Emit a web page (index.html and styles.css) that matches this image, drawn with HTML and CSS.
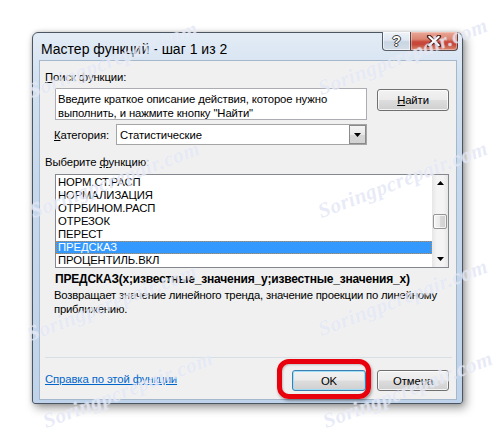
FILE: index.html
```html
<!DOCTYPE html>
<html lang="ru">
<head>
<meta charset="utf-8">
<title>Мастер функций - шаг 1 из 2</title>
<link rel="stylesheet" href="styles.css">
</head>
<body>
<div class="stage">
  <div class="window">
    <div class="titlebar">
      <span class="title">Мастер функций - шаг 1 из 2</span>
      <div class="caption-btns">
        <span class="cbtn help">?</span>
        <span class="cbtn close">
          <svg width="16" height="12" viewBox="0 0 16 12">
            <path d="M3 1.5 L13 10.5 M13 1.5 L3 10.5" stroke="#4a1c16" stroke-width="4.2" stroke-linecap="round"/>
            <path d="M3.3 1.8 L12.7 10.2 M12.7 1.8 L3.3 10.2" stroke="#ffffff" stroke-width="2.2" stroke-linecap="round"/>
          </svg>
        </span>
      </div>
    </div>
    <div class="client">
      <div class="label"><u>П</u>оиск функции:</div>
      <div class="search-row">
        <div class="textbox">Введите краткое описание действия, которое нужно выполнить, и нажмите кнопку "Найти"</div>
        <button class="btn find"><u>Н</u>айти</button>
      </div>
      <div class="cat-row">
        <span class="cat-label"><u>К</u>атегория:</span>
        <div class="combo">
          <span class="combo-text">Статистические</span>
          <span class="combo-btn">
            <svg width="7" height="4" viewBox="0 0 7 4"><path d="M0 0 H7 L3.5 4 Z" fill="#000"/></svg>
          </span>
        </div>
      </div>
      <div class="label choose">Выберите <u>ф</u>ункцию:</div>
      <div class="listbox">
        <ul class="items">
          <li>НОРМ.СТ.РАСП</li>
          <li>НОРМАЛИЗАЦИЯ</li>
          <li>ОТРБИНОМ.РАСП</li>
          <li>ОТРЕЗОК</li>
          <li>ПЕРЕСТ</li>
          <li class="selected">ПРЕДСКАЗ</li>
          <li>ПРОЦЕНТИЛЬ.ВКЛ</li>
        </ul>
        <div class="scrollbar">
          <span class="sb-arrow"><svg width="7" height="4" viewBox="0 0 7 4"><path d="M0 4 H7 L3.5 0 Z" fill="#000"/></svg></span>
          <span class="sb-track-top"></span>
          <span class="sb-thumb"></span>
          <span class="sb-track-bottom"></span>
          <span class="sb-arrow"><svg width="7" height="4" viewBox="0 0 7 4"><path d="M0 0 H7 L3.5 4 Z" fill="#000"/></svg></span>
        </div>
      </div>
      <div class="syntax">ПРЕДСКАЗ(x;известные_значения_y;известные_значения_x)</div>
      <div class="desc">Возвращает значение линейного тренда, значение проекции по линейному<br>приближению.</div>
      <div class="spacer"></div>
      <div class="separator"></div>
      <div class="footer">
        <a class="help-link" href="#">Справка по этой функции</a>
        <div class="footer-btns">
          <span class="ok-wrap"><button class="btn ok">OK</button></span>
          <button class="btn cancel">Отмена</button>
        </div>
      </div>
    </div>
  </div>

  <span class="wm wm1">Soringpcrepair.com</span>
  <span class="wm wm2">Soringpcrepair.com</span>
  <span class="wm wm3">Soringpcrepair.com</span>
  <span class="wm wm4">Soringpcrepair.com</span>
  <span class="wm wm5">Soringpcrepair.com</span>
  <span class="wm wm6">Soringpcrepair.com</span>
  <span class="wm wm7">Soringpcrepair.com</span>
  <span class="wm wm8">Soringpcrepair.com</span>
</div>
</body>
</html>
```

FILE: styles.css
```css
html, body {
  margin: 0;
  padding: 0;
  background: #ffffff;
}

.stage {
  position: relative;
  width: 497px;
  height: 439px;
  box-sizing: border-box;
  padding: 32px 0 0 32px;
  overflow: hidden;
  font-family: "Liberation Sans", Arial, sans-serif;
  font-size: 11.3px;
  letter-spacing: -0.1px;
  color: #000;
}

/* ---------- window frame ---------- */
.window {
  width: 431px;
  height: 372px;
  box-sizing: border-box;
  border: 1px solid #4b5662;
  border-radius: 6px 6px 3px 3px;
  background: linear-gradient(180deg, #e3ecf6 0%, #d3e1f0 12%, #c6d8ec 40%, #bfd3ea 100%);
  box-shadow: 3px 4px 10px rgba(0, 0, 0, 0.38), 0 0 4px rgba(0, 0, 0, 0.18);
  display: flex;
  flex-direction: column;
}

.titlebar {
  height: 27px;
  flex: none;
  display: flex;
  justify-content: space-between;
  align-items: flex-start;
  padding: 0 4px 0 8px;
}

.title {
  font-size: 14px;
  line-height: 14px;
  margin-top: 9px;
  letter-spacing: 0;
  color: #000;
}

.caption-btns {
  display: flex;
  margin-top: -1px;
}

.cbtn {
  height: 19px;
  box-sizing: border-box;
  border: 1px solid rgba(40, 48, 60, 0.75);
  border-top: none;
  display: flex;
  align-items: center;
  justify-content: center;
}

.help {
  width: 28px;
  border-right: none;
  border-radius: 0 0 0 4px;
  background: linear-gradient(180deg, #eef3f8 0%, #dfe7f0 45%, #c9d5e2 55%, #d3dde8 100%);
  box-shadow: inset 0 0 0 1px rgba(255, 255, 255, 0.6);
  color: #fff;
  font-weight: bold;
  font-size: 14px;
  text-shadow: 0 0 1px #333, 1px 0 0 #444, -1px 0 0 #444, 0 1px 0 #444, 0 -1px 0 #444;
}

.close {
  width: 48px;
  border-radius: 0 0 4px 0;
  background: linear-gradient(180deg, #e9a899 0%, #db8571 40%, #c9473a 55%, #c5483a 70%, #d98a72 100%);
  box-shadow: inset 0 0 0 1px rgba(255, 220, 210, 0.45);
}

/* ---------- client ---------- */
.client {
  flex: 1;
  margin: 0 5px 3px 6px;
  box-sizing: border-box;
  border: 1px solid #a4b7cb;
  background: #f0f0f0;
  padding: 9px 5px 8px 5px;
  display: flex;
  flex-direction: column;
}

.label {
  line-height: 15px;
  height: 15px;
}

.search-row {
  display: flex;
  align-items: flex-start;
  margin: 3px 0 0 10px;
  gap: 10px;
}

.textbox {
  width: 312px;
  height: 32px;
  box-sizing: border-box;
  border: 1px solid #abadb3;
  background: #fff;
  padding: 3px 2px 0 2px;
  line-height: 14px;
  overflow: hidden;
}

.btn {
  font-family: "Liberation Sans", Arial, sans-serif;
  font-size: 11.3px;
  letter-spacing: -0.1px;
  color: #000;
  box-sizing: border-box;
  border: 1px solid #707070;
  border-radius: 3px;
  background: linear-gradient(180deg, #f2f2f2 0%, #ebebeb 48%, #dddddd 52%, #cfcfcf 100%);
  box-shadow: inset 0 0 0 1px rgba(255, 255, 255, 0.75);
  padding: 0;
  margin: 0;
}

.find {
  width: 72px;
  height: 22px;
  margin-top: 1px;
}

.cat-row {
  display: flex;
  align-items: center;
  margin: 4px 0 0 9px;
  height: 21px;
}

.cat-label {
  width: 62px;
  flex: none;
}

.combo {
  width: 251px;
  height: 21px;
  box-sizing: border-box;
  border: 1px solid #a5a5a5;
  background: #fff;
  display: flex;
  align-items: center;
  justify-content: space-between;
}

.combo-text {
  padding-left: 3px;
}

.combo-btn {
  width: 17px;
  height: 19px;
  box-sizing: border-box;
  border: 1px solid #8a8a8a;
  background: linear-gradient(180deg, #f4f4f4 0%, #e8e8e8 50%, #d6d6d6 51%, #d2d2d2 100%);
  display: flex;
  align-items: center;
  justify-content: center;
}

.choose {
  margin-top: 10px;
}

.listbox {
  margin: 4px 0 0 10px;
  width: 394px;
  height: 94px;
  box-sizing: border-box;
  border: 1px solid #828790;
  background: #fff;
  display: flex;
}

.items {
  list-style: none;
  margin: 0;
  padding: 1px 0 0 0;
  flex: 1;
}

.items li {
  height: 13px;
  line-height: 13px;
  padding-left: 2px;
  box-sizing: border-box;
  white-space: nowrap;
}

.items li.selected {
  background: #3399ff;
  color: #fff;
  outline: 1px dotted #cf8a3a;
  outline-offset: -1px;
}

.scrollbar {
  width: 16px;
  flex: none;
  display: flex;
  flex-direction: column;
  background: linear-gradient(90deg, #e6e6e6 0%, #f4f4f4 30%, #f4f4f4 70%, #e6e6e6 100%);
}

.sb-arrow {
  height: 16px;
  display: flex;
  align-items: center;
  justify-content: center;
  flex: none;
}

.sb-track-top {
  height: 23px;
  flex: none;
}

.sb-thumb {
  height: 15px;
  margin: 0 1px;
  flex: none;
  box-sizing: border-box;
  border: 1px solid #959595;
  border-radius: 2px;
  background: linear-gradient(90deg, #f5f5f5 0%, #e8e8e8 50%, #d8d8d8 51%, #cfcfcf 100%);
  box-shadow: inset 0 0 0 1px rgba(255, 255, 255, 0.7);
}

.sb-track-bottom {
  flex: 1;
}

.syntax {
  margin: 4px 0 0 10px;
  font-size: 12px;
  font-weight: bold;
  line-height: 15px;
  white-space: nowrap;
  letter-spacing: -0.2px;
}

.desc {
  margin: 1px 0 0 9px;
  line-height: 14px;
  white-space: nowrap;
  letter-spacing: -0.2px;
}

.spacer {
  flex: 1;
}

.separator {
  height: 1px;
  background: #d5dfe5;
  margin-right: -1px;
  flex: none;
}

.footer {
  margin-top: 12px;
  height: 21px;
  flex: none;
  display: flex;
  justify-content: space-between;
  align-items: center;
}

.help-link {
  color: #0066cc;
  text-decoration: underline;
  margin-bottom: 3px;
}

.footer-btns {
  display: flex;
  gap: 11px;
  margin-right: 2px;
}

.ok-wrap {
  position: relative;
  display: block;
}

.ok-wrap::after {
  content: "";
  position: absolute;
  left: -15px;
  top: -11px;
  right: -5px;
  bottom: -8px;
  border: 5px solid #e8000c;
  border-radius: 12px;
  box-shadow: 1px 2px 3px rgba(0, 0, 0, 0.35), inset 1px 1px 2px rgba(0, 0, 0, 0.2);
  pointer-events: none;
}

.ok {
  width: 74px;
  height: 21px;
  display: block;
  border-color: #3c7fb1;
  box-shadow: inset 0 0 0 1px #9fdcf6;
}

.cancel {
  width: 72px;
  height: 21px;
}

/* ---------- watermark overlay ---------- */
.wm {
  position: absolute;
  transform: translate(-50%, -50%) rotate(-21deg);
  font-family: "Liberation Serif", serif;
  font-style: italic;
  font-weight: bold;
  font-size: 21px;
  white-space: nowrap;
  color: rgba(200, 208, 236, 0.42);
  text-shadow: 0 0 1px rgba(255, 255, 255, 0.8);
  pointer-events: none;
  letter-spacing: 0.5px;
}

.wm1 { left: 113px; top: 60px; }
.wm2 { left: 403px; top: 57px; }
.wm3 { left: 115px; top: 180px; }
.wm4 { left: 403px; top: 180px; }
.wm5 { left: 112px; top: 303px; }
.wm6 { left: 403px; top: 298px; }
.wm7 { left: 128px; top: 390px; }
.wm8 { left: 408px; top: 390px; }
```
